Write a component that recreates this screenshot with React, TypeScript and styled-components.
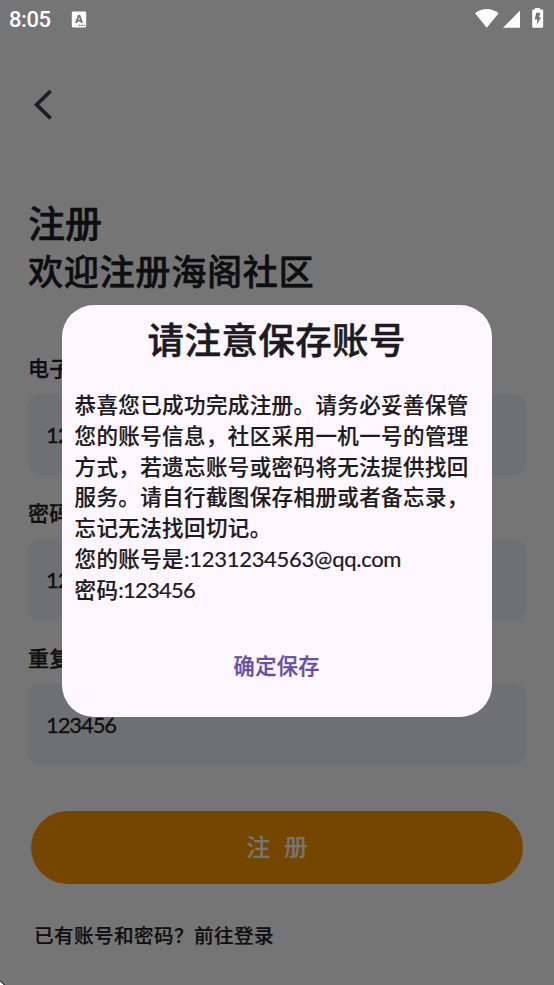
import React from "react";
import styled, { createGlobalStyle } from "styled-components";

const Global = createGlobalStyle`
  *, *::before, *::after { box-sizing: border-box; }
  body { margin: 0; background: #757575; overflow: hidden; }
  button, input { font: inherit; }
`;

const Screen = styled.div`
  position: relative;
  width: 554px;
  height: 985px;
  overflow: hidden;
  background: #fff;
  color: #1f1f25;
  font-family: "Noto Sans CJK SC", sans-serif;
  font-weight: 500;
  white-space: nowrap;
`;

const Page = styled.main`
  display: flex;
  flex-direction: column;
  height: 100%;
  padding: 88px 28px 0;
`;

const BackButton = styled.button`
  width: 32px;
  height: 32px;
  padding: 0;
  border: 0;
  background: none;
  color: #45454c;
  svg { display: block; }
`;

const Heading = styled.h1`
  margin: 79px 0 0;
  font-weight: 500;
  color: #1e2024;
`;

const HeadingLine = styled.span<{ $size: number; $pitch: number }>`
  display: block;
  height: 47px;
  line-height: 47px;
  font-size: ${(p) => p.$size}px;
  letter-spacing: ${(p) => p.$pitch - p.$size}px;
  -webkit-text-stroke: 0.5px currentColor;
`;

const Form = styled.form`
  display: flex;
  flex-direction: column;
  margin-top: 60px;
`;

const Field = styled.label`
  display: flex;
  flex-direction: column;
  height: 145px;
`;

const FieldLabel = styled.span`
  height: 41px;
  line-height: 28px;
  font-size: 21px;
  letter-spacing: 0.3px;
  -webkit-text-stroke: 0.3px currentColor;
`;

const Input = styled.input`
  height: 81px;
  padding: 0 18px;
  border: 0;
  border-radius: 12px;
  background: #f0f3f8;
  color: #1f1f25;
  font: 22px Lato, sans-serif;
  letter-spacing: -1.1px;
  -webkit-text-stroke: 0.3px currentColor;
`;

const Submit = styled.button`
  height: 73px;
  margin: 22.5px 3px 0;
  padding: 0 0 3px;
  border: 0;
  border-radius: 36.5px;
  background: #ff9900;
  color: #fff;
  font-size: 24px;
  font-weight: 500;
  word-spacing: 8px;
`;

const Footer = styled.p`
  margin: 37px 0 0 6px;
  line-height: 28px;
  font-size: 19.6px;
  letter-spacing: 0.4px;
  -webkit-text-stroke: 0.2px currentColor;
`;

const Scrim = styled.div`
  position: absolute;
  inset: 0;
  display: flex;
  flex-direction: column;
  background: rgba(0, 0, 0, 0.54);
`;

const StatusBar = styled.header`
  display: flex;
  align-items: center;
  height: 38px;
  padding: 0 9px;
  color: #fff;
  svg { display: block; }
`;

const Clock = styled.time`
  width: 62px;
  padding-top: 2px;
  font: 500 22px/38px Roboto, sans-serif;
  letter-spacing: -0.4px;
`;

const StatusIcons = styled.div`
  margin-left: auto;
`;

const Dialog = styled.section`
  display: flex;
  flex-direction: column;
  align-items: center;
  width: 430.5px;
  height: 412px;
  margin: 267px 0 0 61.5px;
  border-radius: 32px;
  background: #fef7ff;
  color: #1d1b20;
`;

const DialogTitle = styled.h2`
  margin: 7px 0 0;
  line-height: 54px;
  font-size: 36.5px;
  font-weight: 500;
  letter-spacing: 0.4px;
  -webkit-text-stroke: 0.5px currentColor;
`;

const DialogBody = styled.div`
  align-self: stretch;
  margin: 23px 0 0 13px;
  line-height: 30.75px;
  font-size: 21.5px;
  letter-spacing: 0.4px;
  -webkit-text-stroke: 0.2px currentColor;
`;

const BodyLine = styled.div`
  height: 30.75px;
`;

const Latin = styled.span<{ $spacing: number }>`
  font-family: Lato, sans-serif;
  font-size: 22px;
  font-weight: 400;
  letter-spacing: ${(p) => p.$spacing}px;
`;

const Confirm = styled.button`
  margin-top: 45px;
  padding: 0;
  border: 0;
  background: none;
  color: #6750a4;
  line-height: 32px;
  font-size: 21.2px;
  letter-spacing: 0.4px;
  -webkit-text-stroke: 0.3px currentColor;
`;

const Corner = styled.svg`
  position: absolute;
  left: 0;
  bottom: 0;
`;

const fields = [
  { label: "电子邮箱", value: "1231234563@qq.com" },
  { label: "密码", value: "123456" },
  { label: "重复密码", value: "123456" },
];

const notice = [
  "恭喜您已成功完成注册。请务必妥善保管",
  "您的账号信息，社区采用一机一号的管理",
  "方式，若遗忘账号或密码将无法提供找回",
  "服务。请自行截图保存相册或者备忘录，",
  "忘记无法找回切记。",
];

export default function App() {
  return (
    <Screen>
      <Global />
      <Page>
        <BackButton type="button" aria-label="返回">
          <svg width="32" height="32" viewBox="0 0 32 32" fill="none" stroke="currentColor" strokeWidth="3.8">
            <path d="M22.6 3L8.6 16.7L22.6 30.4" />
          </svg>
        </BackButton>
        <Heading>
          <HeadingLine $size={37} $pitch={37}>注册</HeadingLine>
          <HeadingLine $size={35.2} $pitch={35.8}>欢迎注册海阁社区</HeadingLine>
        </Heading>
        <Form>
          {fields.map((f) => (
            <Field key={f.label}>
              <FieldLabel>{f.label}</FieldLabel>
              <Input defaultValue={f.value} />
            </Field>
          ))}
          <Submit type="button">注 册</Submit>
        </Form>
        <Footer>已有账号和密码？前往登录</Footer>
      </Page>
      <Scrim>
        <StatusBar>
          <Clock>8:05</Clock>
          <svg width="16" height="17" viewBox="0 0 16 17">
            <rect x="0.8" y="0.5" width="14.4" height="16" rx="1.4" fill="#fff" />
            <path fill="#757575" fillRule="evenodd" d="M6.9 4H9.2L12 12H9.8L9.3 10.4H6.7L6.2 12H4.1ZM7.2 8.8H8.9L8.05 6ZM8 13.7h1.5v1.3H8zM10.4 13.7h1.5v1.3h-1.5zM12.8 13.7h1.3v1.3h-1.3z" />
          </svg>
          <StatusIcons>
            <svg width="70" height="22" viewBox="475 8 70 22" fill="#fff">
              <path d="M475 13.2Q486.8 4.8 498.6 13.2L486.8 27.7Z" />
              <path d="M503 27.8L520 10.6V27.8Z" />
              <path d="M535 8h5v1.5h2a1.2 1.2 0 0 1 1.2 1.2v15.8a1.2 1.2 0 0 1-1.2 1.2h-8.6a1.2 1.2 0 0 1-1.2-1.2V10.7a1.2 1.2 0 0 1 1.2-1.2H535z" />
              <path fill="#757575" d="M536.2 12.8h4.2l-1.3 4.4h2L536.8 25l.5-5.6h-2.6z" />
            </svg>
          </StatusIcons>
        </StatusBar>
        <Dialog role="dialog">
          <DialogTitle>请注意保存账号</DialogTitle>
          <DialogBody>
            {notice.map((line) => (
              <BodyLine key={line}>{line}</BodyLine>
            ))}
            <BodyLine>
              您的账号是<Latin $spacing={-0.28}>:1231234563@qq.com</Latin>
            </BodyLine>
            <BodyLine>
              密码<Latin $spacing={-0.75}>:123456</Latin>
            </BodyLine>
          </DialogBody>
          <Confirm type="button">确定保存</Confirm>
        </Dialog>
      </Scrim>
      <Corner width="5" height="5" viewBox="0 0 5 5">
        <path d="M0 1L4 5H0Z" fill="#fff" />
        <path d="M0 0.5L4.5 5" stroke="#000" strokeWidth="1" />
      </Corner>
    </Screen>
  );
}
